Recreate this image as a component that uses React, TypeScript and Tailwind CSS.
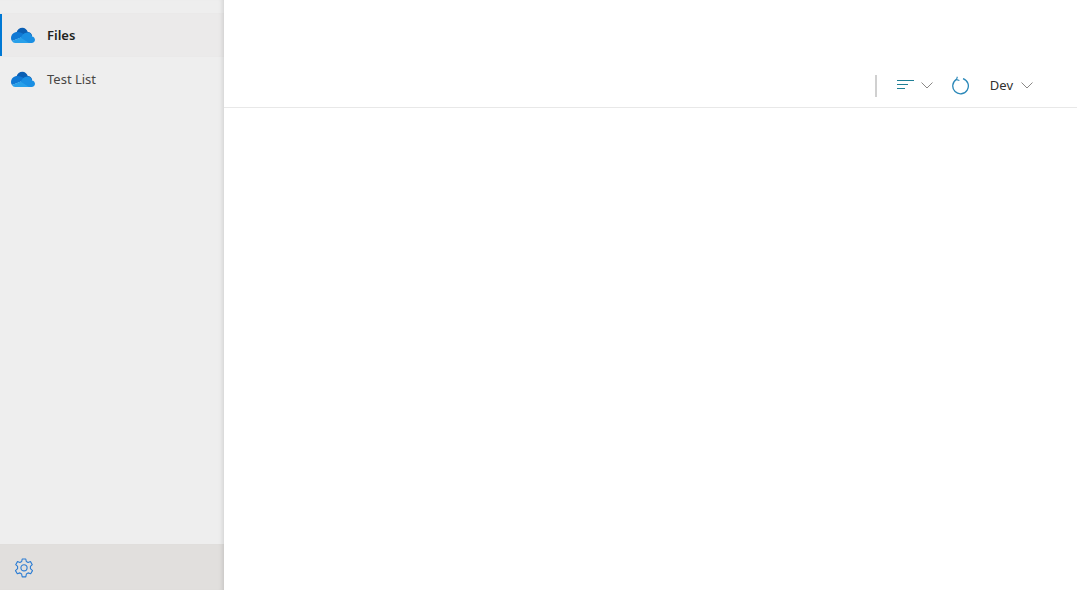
const font = { fontFamily: '"Noto Sans", "Open Sans", sans-serif' };
const edge = "shadow-[inset_-5px_0_5px_-4px_rgba(0,0,0,0.14)]";

function Cloud() {
  return (
    <svg width="24" height="16" viewBox="0 0 24 16" className="shrink-0">
      <path d="M5.5 5.5 C6.3 2.7 8.6 0.8 11.4 0.8 C13.9 0.8 15.9 2.4 16.8 5 C19 5 20.7 6.6 21.2 9 L15 13 L8 9 Z" fill="#0a5fb4" />
      <path d="M6.4 5 C2.8 5 0 7.6 0 11 C0 12.2 0.4 13.2 1 14 L9 11 L13 7.6 C11.5 6 9 5 6.4 5 Z" fill="#0f78d4" />
      <path d="M16.6 5.6 C14.4 5.6 12.5 6.6 11.3 8.2 L9 11 L4 16 L20.6 16 C22.6 16 24 14.6 24 12.8 C24 11 22.6 9.6 21 9.4 C20.4 7.2 18.6 5.6 16.6 5.6 Z" fill="#1a8fe3" />
      <path d="M1 14 C1.6 15.2 2.8 16 4 16 L18 16 L9.6 10.4 Z" fill="#28a0ea" />
    </svg>
  );
}

function Chevron({ color = "#8a8886" }: { color?: string }) {
  return (
    <svg width="12" height="7" viewBox="0 0 12 7" fill="none" stroke={color} strokeWidth="1">
      <path d="M0.5 0.5 L6 6 L11.5 0.5" />
    </svg>
  );
}

function Gear() {
  return (
    <svg width="20" height="20" viewBox="0 0 20 20" fill="none" stroke="#2b7cd3" strokeWidth="1.1" strokeLinejoin="round">
      <path d="M8.2 1 H11.8 L12.3 3.5 L14.1 4.5 L16.5 3.6 L18.3 6.7 L16.4 8.4 V10.6 L18.5 12.6 L16.7 15.7 L14.1 14.9 L12.4 16 L11.8 18.9 H8.2 L7.6 16 L5.9 14.9 L3.3 15.7 L1.5 12.6 L3.6 10.6 V8.4 L1.7 6.7 L3.5 3.6 L5.9 4.5 L7.7 3.5 Z" />
      <circle cx="10" cy="9.8" r="3.1" />
    </svg>
  );
}

function Item({ label, active }: { label: string; active?: boolean }) {
  return (
    <div className={`relative h-11 flex items-center pl-[11px] gap-3 ${active ? `bg-[#ebeaea] ${edge}` : ""}`}>
      {active && <div className="absolute left-0 top-px bottom-px w-0.5 bg-[#0078d4]" />}
      <Cloud />
      <span className={`text-[13px] pt-px ${active ? "font-semibold text-[#201f1e]" : "text-[#484644]"}`}>{label}</span>
    </div>
  );
}

export default function App() {
  return (
    <div className="flex h-[590px] w-[1077px] overflow-hidden bg-white" style={font}>
      <aside className={`w-[224px] shrink-0 flex flex-col bg-[#eeeeee] ${edge}`}>
        <div className="pt-[13px] flex-1 flex flex-col">
          <Item label="Files" active />
          <Item label="Test List" />
        </div>
        <div className={`h-[46px] bg-[#e1dfdd] ${edge} flex items-center pl-[14px] pt-px`}>
          <Gear />
        </div>
      </aside>
      <main className="flex-1 flex flex-col">
        <header className="h-[108px] border-b border-[#e8e8e8] flex items-end justify-end pb-[10px] pr-[44px]">
          <div className="w-0.5 h-[22px] bg-[#d0d0d0] mr-5" />
          <svg width="17" height="10" viewBox="0 0 17 10" stroke="#1f7f96" strokeWidth="1" className="mr-[7px] mb-[7px]">
            <path d="M0 0.5 H17 M0 4.5 H11 M0 8.5 H8" />
          </svg>
          <span className="mr-[19px] mb-[8px]"><Chevron /></span>
          <svg width="18" height="20" viewBox="0 0 18 20" fill="none" stroke="#2b88b8" strokeWidth="1.3" className="mr-5 mb-[2px]">
            <path d="M4.4 4.4 A7.8 7.8 0 1 0 11 3.6" />
            <path d="M5.4 1.8 L4.4 4.6 L7.4 5.6" strokeWidth="1.1" />
          </svg>
          <span className="text-[13px] text-[#323130] mr-2 mb-[2px] leading-[20px]">Dev</span>
          <span className="mb-[8px]"><Chevron /></span>
        </header>
        <div className="flex-1" />
      </main>
    </div>
  );
}
